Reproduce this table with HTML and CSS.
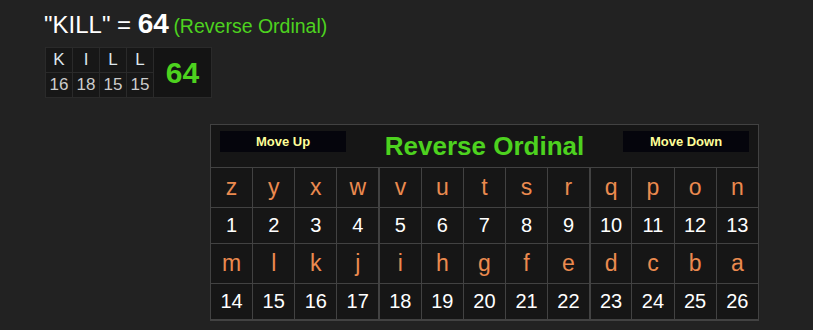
FILE: index.html
```html
<!DOCTYPE html>
<html>
<head>
<meta charset="utf-8">
<link rel="stylesheet" href="styles.css">
</head>
<body>
<div class="page">
  <div class="headline">
    <span class="word">"KILL" = </span><span class="total">64</span> <span class="cipher">(Reverse Ordinal)</span>
  </div>
  <table class="mini">
    <tr>
      <td class="ml">K</td><td class="ml">I</td><td class="ml">L</td><td class="ml">L</td>
      <td class="msum" rowspan="2">64</td>
    </tr>
    <tr>
      <td class="mn">16</td><td class="mn">18</td><td class="mn">15</td><td class="mn">15</td>
    </tr>
  </table>
  <table class="chart">
    <tr class="head">
      <td colspan="13">
        <div class="headbar">
          <button class="move">Move Up</button>
          <span class="title">Reverse Ordinal</span>
          <button class="move">Move Down</button>
        </div>
      </td>
    </tr>
    <tr class="let">
      <td>z</td><td>y</td><td>x</td><td class="sep">w</td><td>v</td><td>u</td><td>t</td><td>s</td><td class="sep">r</td><td>q</td><td>p</td><td>o</td><td>n</td>
    </tr>
    <tr class="num">
      <td>1</td><td>2</td><td>3</td><td class="sep">4</td><td>5</td><td>6</td><td>7</td><td>8</td><td class="sep">9</td><td>10</td><td>11</td><td>12</td><td>13</td>
    </tr>
    <tr class="let">
      <td>m</td><td>l</td><td>k</td><td class="sep">j</td><td>i</td><td>h</td><td>g</td><td>f</td><td class="sep">e</td><td>d</td><td>c</td><td>b</td><td>a</td>
    </tr>
    <tr class="num last">
      <td>14</td><td>15</td><td>16</td><td class="sep">17</td><td>18</td><td>19</td><td>20</td><td>21</td><td class="sep">22</td><td>23</td><td>24</td><td>25</td><td>26</td>
    </tr>
  </table>
</div>
</body>
</html>
```
FILE: styles.css
```css
html, body {
  margin: 0;
  padding: 0;
  background: #222222;
}
body {
  font-family: "Liberation Sans", Arial, sans-serif;
  color: #ffffff;
}
.page {
  padding: 8px 0 0 44px;
}
.headline {
  height: 32px;
  line-height: 32px;
  white-space: nowrap;
}
.word {
  font-size: 24px;
  color: #ffffff;
}
.total {
  font-size: 28px;
  font-weight: bold;
  color: #ffffff;
}
.cipher {
  font-size: 19.5px;
  color: #4dd21f;
}
.mini {
  margin-top: 7px;
  margin-left: 1px;
  border-collapse: collapse;
  background: #171717;
}
.mini td {
  border: 1px solid #2a2a2a;
  padding: 0;
  text-align: center;
  width: 26px;
}
.ml {
  height: 24px;
  font-size: 17px;
  color: #dde6ee;
}
.mn {
  height: 24px;
  font-size: 17px;
  color: #cccccc;
}
.mini td.msum {
  width: 57px;
  font-size: 30px;
  font-weight: bold;
  color: #4dd21f;
  background: #141414;
}
.chart {
  margin: 26px 0 0 166px;
  width: 549px;
  table-layout: fixed;
  border-collapse: collapse;
  background: #161616;
  border: 1px solid #424242;
  border-bottom: 2px solid #424242;
}
.chart td {
  border: 1px solid #424242;
  padding: 0;
  text-align: center;
}
.chart td.sep {
  border-right: 2px solid #424242;
}
.head td {
  height: 42px;
  vertical-align: top;
}
.headbar {
  display: flex;
  justify-content: space-between;
  align-items: flex-start;
  padding: 0 9px;
}
.move {
  width: 126px;
  height: 21px;
  margin-top: 6px;
  border: 0;
  padding: 0;
  background: #05050c;
  color: #ffff99;
  font-family: "Liberation Sans", Arial, sans-serif;
  font-size: 13px;
  font-weight: bold;
}
.title {
  font-size: 26px;
  font-weight: bold;
  color: #4dd21f;
  line-height: 30px;
  margin-top: 6px;
}
.let td {
  height: 39px;
  font-size: 23px;
  color: #eb8a4f;
}
.num td {
  height: 35px;
  font-size: 20px;
  color: #ffffff;
}
```
